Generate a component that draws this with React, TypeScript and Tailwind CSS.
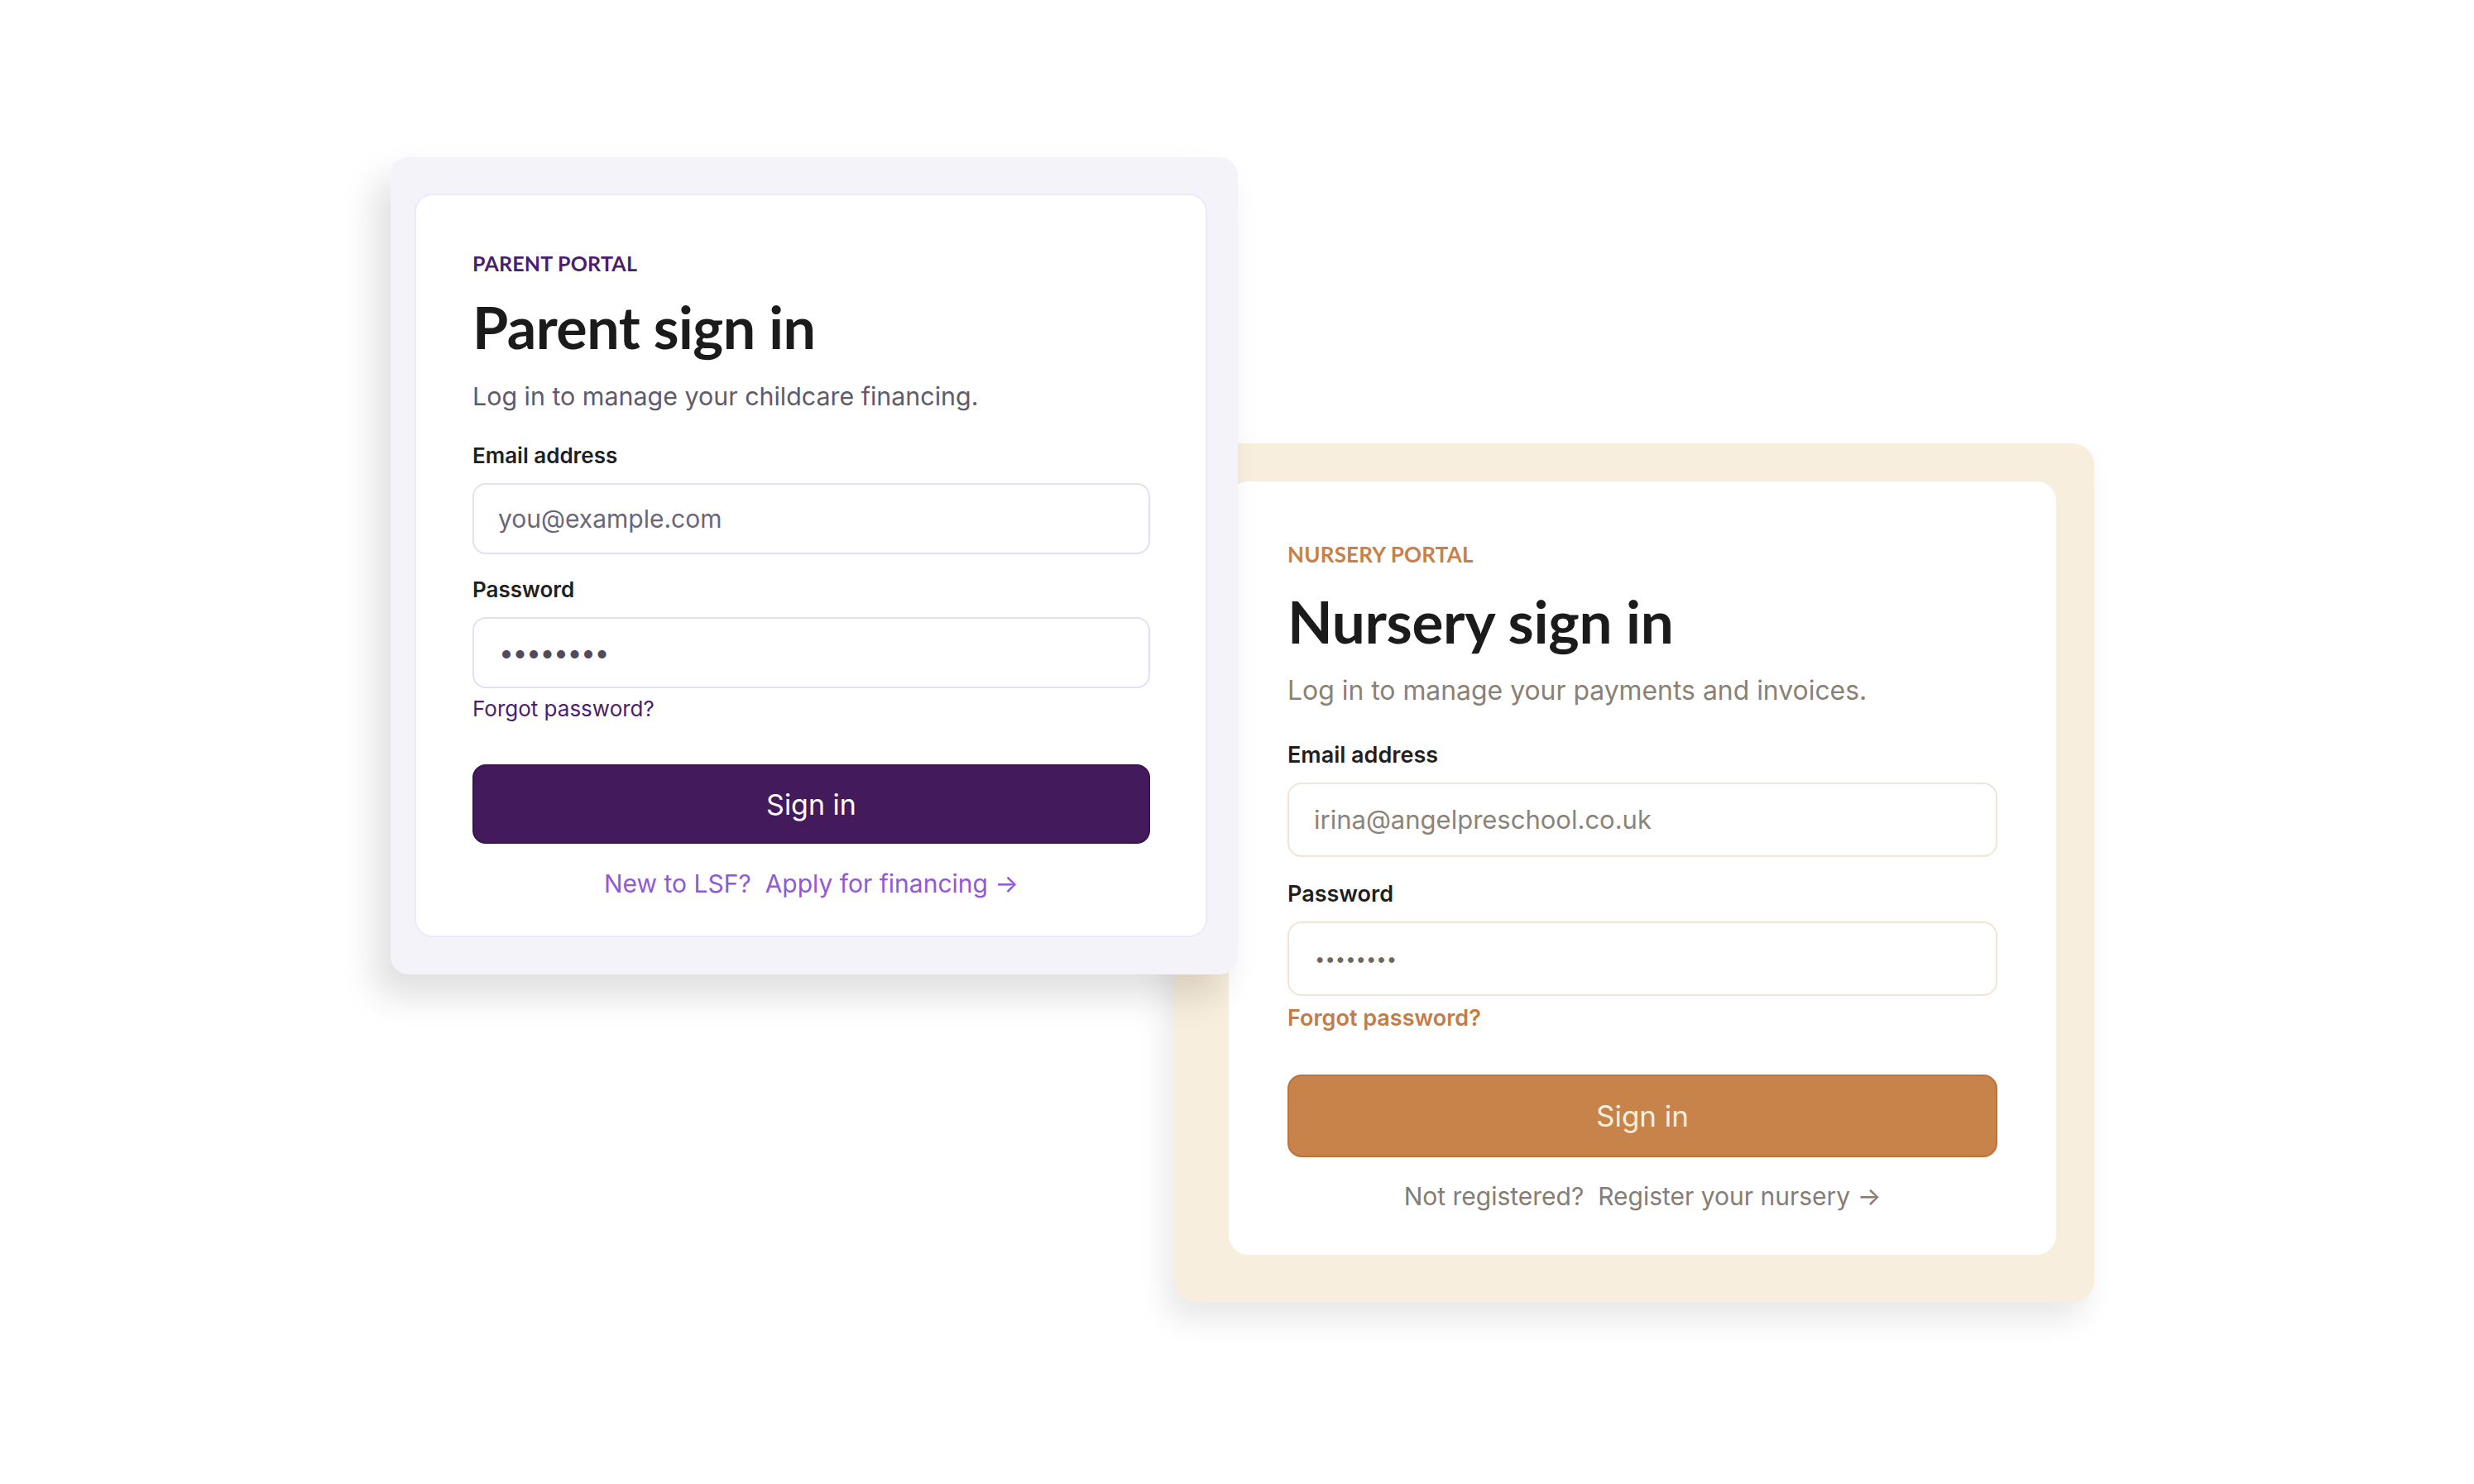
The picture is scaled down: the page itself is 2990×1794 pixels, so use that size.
import React from 'react';

const display = { fontFamily: 'Lato, "Noto Sans", sans-serif' };
const body = { fontFamily: 'Inter, "Liberation Sans", sans-serif' };

export default function App() {
  return (
    <div className="min-h-[1794px] w-full bg-white pl-[472px] pt-[190px]" style={body}>
      <div className="flex items-start">
        {/* parent portal */}
        <div className="relative z-10 w-[1024px] shrink-0 rounded-[22px] bg-[#f4f3fa] pt-[44px] pr-[37px] pb-[45px] pl-[29px] shadow-[-18px_26px_44px_rgba(0,0,0,0.13)]">
          <div className="rounded-[22px] border-2 border-[#eee8fa] bg-white pt-[70px] pr-[67px] pb-[48px] pl-[68px]">
            <div className="text-[25px] leading-[25px] font-bold tracking-[0.2px] text-[#4a1d6e]" style={display}>
              PARENT PORTAL
            </div>
            <h1 className="mt-[30px] text-[70px] leading-[69px] font-bold tracking-[-0.5px] text-[#1b1b1b]" style={display}>
              Parent sign in
            </h1>
            <p className="mt-[35px] text-[30.4px] leading-[29px] text-[#5f5b6b]">
              Log in to manage your childcare financing.
            </p>

            <div className="mt-[44px] text-[26px] leading-[26px] font-semibold text-[#1f1f1f]">Email address</div>
            <div className="mt-[20px] flex h-[86px] items-center rounded-[16px] border-2 border-[#e6ddf7] pl-[29px] text-[30px] text-[#6b6679]">
              you@example.com
            </div>

            <div className="mt-[30px] text-[26px] leading-[26px] font-semibold text-[#1f1f1f]">Password</div>
            <div className="mt-[20px] flex h-[86px] items-center rounded-[16px] border-2 border-[#e6ddf7] pl-[30px] text-[32px] tracking-[-1.5px] text-[#4f4b5c]">
              ••••••••
            </div>
            <div className="mt-[12px] text-[26px] leading-[26px] text-[#4a1d6e]">Forgot password?</div>

            <button className="mt-[54px] flex h-[96px] w-full items-center justify-center rounded-[16px] border-2 border-[#3a1450] bg-[#431a5c] text-[34px] text-white">
              Sign in
            </button>
            <div className="mt-[33px] text-center text-[30px] leading-[30px] text-[#9059d6]">
              New to LSF?&nbsp; Apply for financing →
            </div>
          </div>
        </div>

        {/* nursery portal */}
        <div className="ml-[-77px] mt-[346px] w-[1112px] shrink-0 rounded-[26px] bg-[#f8eedd] pt-[46px] pr-[46px] pb-[57px] pl-[66px] shadow-[-10px_22px_36px_rgba(0,0,0,0.09)]">
          <div className="rounded-[24px] bg-white pt-[75px] pr-[71px] pb-[56px] pl-[71px]">
            <div className="text-[26px] leading-[26px] font-bold tracking-[0.2px] text-[#c8804a]" style={display}>
              NURSERY PORTAL
            </div>
            <h1 className="mt-[32px] text-[71px] leading-[71px] font-bold tracking-[-0.3px] text-[#1b1b1b]" style={display}>
              Nursery sign in
            </h1>
            <p className="mt-[34px] text-[31.9px] leading-[30px] text-[#8a8176]">
              Log in to manage your payments and invoices.
            </p>

            <div className="mt-[49px] text-[27px] leading-[27px] font-semibold text-[#1f1f1f]">Email address</div>
            <div className="mt-[20px] flex h-[90px] items-center rounded-[17px] border-2 border-[#f3e4d6] pl-[30px] text-[31px] text-[#8c8478]">
              irina@angelpreschool.co.uk
            </div>

            <div className="mt-[31px] text-[27px] leading-[27px] font-semibold text-[#1f1f1f]">Password</div>
            <div className="mt-[20px] flex h-[90px] items-center rounded-[17px] border-2 border-[#f3e4d6] pl-[31px] text-[22px] tracking-[0px] text-[#6f675d]">
              ••••••••
            </div>
            <div className="mt-[13px] text-[27px] leading-[27px] font-semibold text-[#c57c43]">Forgot password?</div>

            <button className="mt-[55px] flex h-[100px] w-full items-center justify-center rounded-[17px] border-2 border-[#bd7339] bg-[#c8834a] text-[35px] text-[#fbeedd]">
              Sign in
            </button>
            <div className="mt-[32px] text-center text-[30px] leading-[30px] text-[#857d73]">
              Not registered?&nbsp; Register your nursery →
            </div>
          </div>
        </div>
      </div>
    </div>
  );
}
